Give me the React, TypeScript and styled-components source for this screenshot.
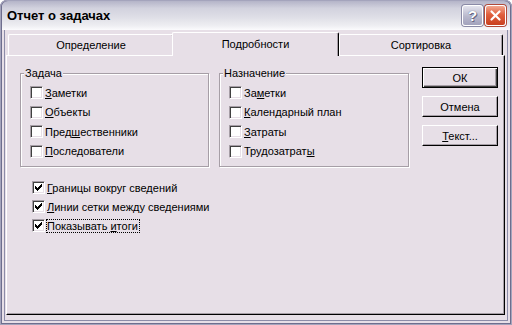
import React from "react";
import styled, { createGlobalStyle } from "styled-components";

const FACE = "#e7dfe7";
const SHADOW = "#a69ea6";
const FONT = `"Liberation Sans", Arial, sans-serif`;

const GlobalStyle = createGlobalStyle`
  html, body {
    margin: 0;
    padding: 0;
    background: #ffffff;
  }
  body {
    font-family: ${FONT};
    font-size: 11px;
    color: #000;
  }
`;

/* Janela principal com moldura */
const Window = styled.div`
  width: 512px;
  height: 325px;
  box-sizing: border-box;
  display: flex;
  flex-direction: column;
  background: ${FACE};
  border-radius: 7px 7px 0 0;
  overflow: hidden;
  box-shadow: inset 0 0 0 1px #a4a4bc, inset 0 0 0 2px #6e6e8e,
    inset 0 0 0 4px ${FACE}, inset 0 0 0 5px #8c8ca8;
`;

const TitleBar = styled.div`
  height: 29px;
  margin: 1px 2px 0;
  padding: 0 4px 0 5px;
  display: flex;
  align-items: center;
  justify-content: space-between;
  border-radius: 6px 6px 0 0;
  background: linear-gradient(
    180deg,
    #b4b4c8 0%,
    #d2d2de 25%,
    #dedee6 55%,
    #eeeef2 85%,
    #fbfbfd 100%
  );
`;

const Title = styled.span`
  font-family: ${FONT};
  font-size: 13px;
  font-weight: bold;
  color: #000;
`;

const CaptionButtons = styled.div`
  display: flex;
  gap: 2px;
`;

const CaptionButton = styled.div<{ $close?: boolean }>`
  width: 21px;
  height: 21px;
  box-sizing: border-box;
  border-radius: 3px;
  border: 1px solid #ffffff;
  box-shadow: 0 0 0 1px ${(p) => (p.$close ? "#b04a3a" : "#8a8aa6")};
  display: flex;
  align-items: center;
  justify-content: center;
  background: ${(p) =>
    p.$close
      ? "linear-gradient(180deg, #f2a78f 0%, #e0603e 45%, #c9401f 100%)"
      : "linear-gradient(180deg, #e4e4ee 0%, #b8b8cc 55%, #a2a2bc 100%)"};
  color: #fff;
  font-family: ${FONT};
  font-weight: bold;
  font-size: 15px;
  text-shadow: 0 0 1px #4a4a66, 1px 1px 0 #6a6a88;
`;

const Body = styled.div`
  flex: 1;
  display: flex;
  flex-direction: column;
  padding: 2px 7px 10px 6px;
`;

const TabRow = styled.div`
  display: flex;
  align-items: flex-end;
  height: 23px;
  padding-left: 2px;
  position: relative;
  z-index: 1;
`;

const Tab = styled.div<{ $active?: boolean; $w: number }>`
  position: relative;
  z-index: ${(p) => (p.$active ? 2 : 1)};
  width: ${(p) => p.$w}px;
  height: ${(p) => (p.$active ? 24 : 21)}px;
  margin-bottom: ${(p) => (p.$active ? -1 : 0)}px;
  padding-bottom: ${(p) => (p.$active ? 2 : 0)}px;
  box-sizing: border-box;
  border-top: 1px solid #fff;
  border-left: 1px solid #fff;
  border-right: 1px solid #000;
  border-radius: 2px 2px 0 0;
  box-shadow: inset -1px 0 0 ${SHADOW};
  background: ${FACE};
  display: flex;
  align-items: center;
  justify-content: center;
`;

const Panel = styled.div`
  flex: 1;
  box-sizing: border-box;
  border-top: 1px solid #fff;
  border-left: 1px solid #fff;
  border-right: 1px solid #000;
  border-bottom: 1px solid #000;
  box-shadow: inset -1px -1px 0 ${SHADOW};
  padding: 11px 0 0 13px;
  display: flex;
  flex-direction: column;
`;

const TopRow = styled.div`
  display: flex;
  align-items: flex-start;
`;

/* Moldura de grupo com borda gravada */
const Group = styled.div<{ $w: number; $gap: number }>`
  position: relative;
  box-sizing: border-box;
  width: ${(p) => p.$w}px;
  height: 94px;
  margin-top: 6px;
  margin-right: ${(p) => p.$gap}px;
  border: 1px solid ${SHADOW};
  box-shadow: inset 1px 1px 0 #fff, 1px 1px 0 #fff;
  padding: 12px 0 0 9px;
  display: flex;
  flex-direction: column;
  gap: 6.5px;
`;

const GroupLabel = styled.span`
  position: absolute;
  top: -7px;
  left: 3px;
  padding: 0 1px;
  line-height: 13px;
  background: ${FACE};
`;

const ButtonColumn = styled.div`
  display: flex;
  flex-direction: column;
  gap: 8px;
`;

const Button = styled.div<{ $default?: boolean }>`
  width: 76px;
  height: 21px;
  box-sizing: border-box;
  display: flex;
  align-items: center;
  justify-content: center;
  background: ${FACE};
  ${(p) =>
    p.$default
      ? `border: 1px solid #000;
         box-shadow: inset 1px 1px 0 #fff, inset -1px -1px 0 #404040, inset -2px -2px 0 ${SHADOW};`
      : `border-top: 1px solid #fff;
         border-left: 1px solid #fff;
         border-right: 1px solid #000;
         border-bottom: 1px solid #000;
         box-shadow: inset -1px -1px 0 ${SHADOW};`}
`;

const OptionList = styled.div`
  display: flex;
  flex-direction: column;
  gap: 6px;
  margin-top: 14px;
  padding-left: 12px;
`;

const Row = styled.div`
  display: flex;
  align-items: center;
  height: 13px;
`;

const Box = styled.span`
  flex: none;
  width: 13px;
  height: 13px;
  box-sizing: border-box;
  background: #fff;
  border: 1px solid;
  border-color: ${SHADOW} #fff #fff ${SHADOW};
  box-shadow: inset 1px 1px 0 #404040, inset -1px -1px 0 ${FACE};
  display: flex;
`;

const Label = styled.span<{ $focus?: boolean }>`
  margin-left: 1px;
  padding: 0 1px 0 0;
  line-height: 12px;
  white-space: nowrap;
  border: 1px dotted ${(p) => (p.$focus ? "#000" : "transparent")};
`;

const CHECK =
  "M9 3h1v1h-1zM8 4h2v1h-2zM3 5h1v1h-1zM7 5h3v1h-3zM3 6h2v1h-2zM6 6h3v1h-3zM3 7h5v1h-5zM4 8h3v1h-3zM5 9h1v1h-1z";

function Check({
  checked,
  focus,
  children,
}: {
  checked?: boolean;
  focus?: boolean;
  children: React.ReactNode;
}) {
  return (
    <Row>
      <Box>
        {checked && (
          <svg width="11" height="11" viewBox="1 1 11 11" shapeRendering="crispEdges">
            <path d={CHECK} fill="#000" />
          </svg>
        )}
      </Box>
      <Label $focus={focus}>{children}</Label>
    </Row>
  );
}

export default function App() {
  return (
    <>
      <GlobalStyle />
      <Window>
        <TitleBar>
          <Title>Отчет о задачах</Title>
          <CaptionButtons>
            <CaptionButton>?</CaptionButton>
            <CaptionButton $close>
              <svg width="13" height="13" viewBox="0 0 13 13">
                <path
                  d="M2.5 2.5L10.5 10.5M10.5 2.5L2.5 10.5"
                  stroke="#fff"
                  strokeWidth="2.2"
                  strokeLinecap="round"
                />
              </svg>
            </CaptionButton>
          </CaptionButtons>
        </TitleBar>

        <Body>
          <TabRow>
            <Tab $w={166} style={{ marginRight: -2 }}>Определение</Tab>
            <Tab $w={167} $active>
              Подробности
            </Tab>
            <Tab $w={164}>Сортировка</Tab>
          </TabRow>

          <Panel>
            <TopRow>
              <Group $w={189} $gap={10}>
                <GroupLabel>Задача</GroupLabel>
                <Check>
                  <u>З</u>аметки
                </Check>
                <Check>
                  <u>О</u>бъекты
                </Check>
                <Check>
                  Пред<u>ш</u>ественники
                </Check>
                <Check>
                  <u>П</u>оследователи
                </Check>
              </Group>

              <Group $w={190} $gap={13}>
                <GroupLabel>Назначение</GroupLabel>
                <Check>
                  За<u>м</u>етки
                </Check>
                <Check>
                  <u>К</u>алендарный план
                </Check>
                <Check>
                  <u>З</u>атраты
                </Check>
                <Check>
                  Трудозатрат<u>ы</u>
                </Check>
              </Group>

              <ButtonColumn>
                <Button $default>ОК</Button>
                <Button>Отмена</Button>
                <Button>
                  <span>
                    <u>Т</u>екст...
                  </span>
                </Button>
              </ButtonColumn>
            </TopRow>

            <OptionList>
              <Check checked>
                <u>Г</u>раницы вокруг сведений
              </Check>
              <Check checked>
                <u>Л</u>инии сетки между сведениями
              </Check>
              <Check checked focus>
                Показывать <u>и</u>тоги
              </Check>
            </OptionList>
          </Panel>
        </Body>
      </Window>
    </>
  );
}
